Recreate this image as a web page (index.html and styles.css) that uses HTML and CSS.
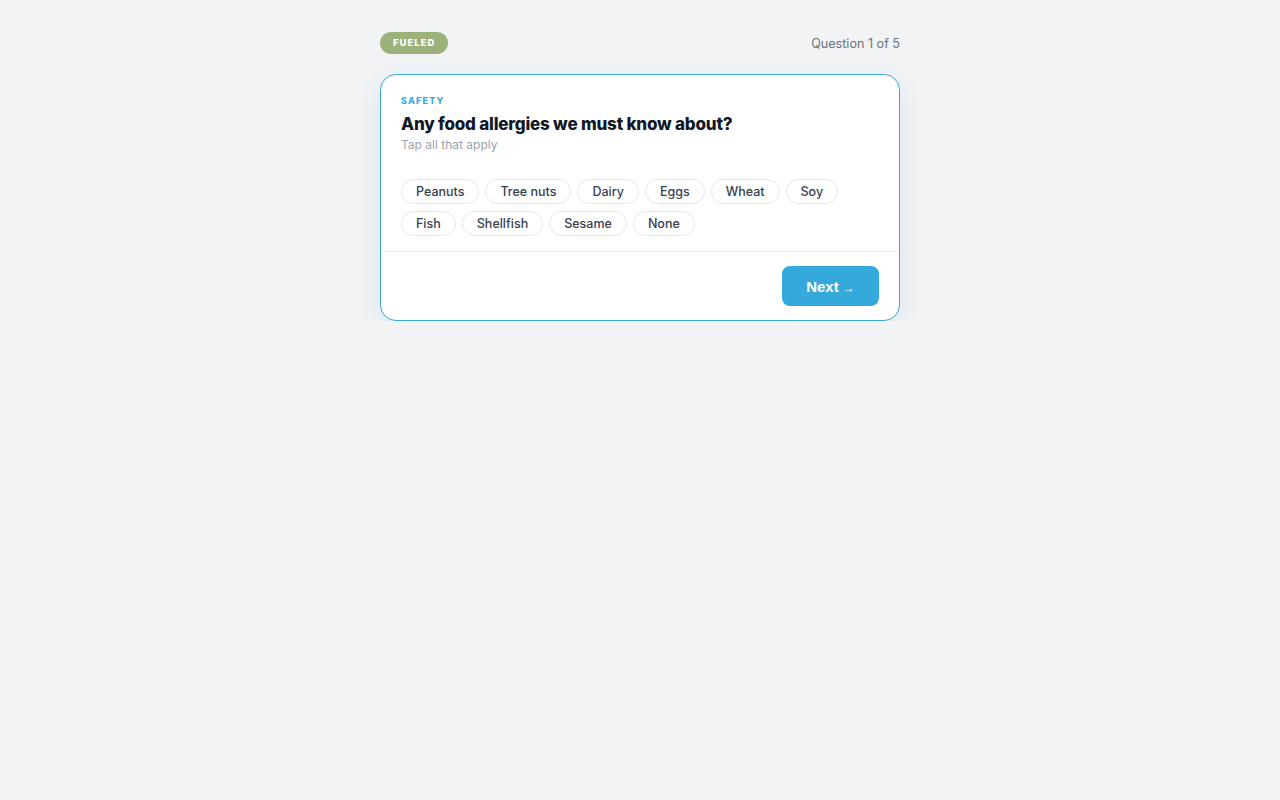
FILE: index.html
```html
<!DOCTYPE html>
<html lang="en">
<head>
    <meta charset="UTF-8">
    <meta name="viewport" content="width=device-width, initial-scale=1.0">
    <title>Fueled Quiz</title>
    <link rel="stylesheet" href="styles.css">
</head>
<body>
    <div class="wrap">
        <div class="top">
            <span class="badge">FUELED</span>
            <span class="progress">Question 1 of 5</span>
        </div>

        <div class="card">
            <div class="card-body">
                <div class="eyebrow">SAFETY</div>
                <h1 class="question">Any food allergies we must know about?</h1>
                <div class="hint">Tap all that apply</div>

                <div class="chips">
                    <button class="chip">Peanuts</button>
                    <button class="chip">Tree nuts</button>
                    <button class="chip">Dairy</button>
                    <button class="chip">Eggs</button>
                    <button class="chip">Wheat</button>
                    <button class="chip">Soy</button>
                    <button class="chip">Fish</button>
                    <button class="chip">Shellfish</button>
                    <button class="chip">Sesame</button>
                    <button class="chip">None</button>
                </div>
            </div>
            <div class="card-foot">
                <button class="next">Next <span class="arrow">&rarr;</span></button>
            </div>
        </div>
    </div>
</body>
</html>
```

FILE: styles.css
```css
body {
    margin: 0;
    font-family: Inter, "Noto Sans", sans-serif;
    background-color: #f1f3f5;
    color: #111827;
}
.wrap {
    width: 520px;
    margin: 0 auto;
    padding-top: 32px;
}
.top {
    display: flex;
    justify-content: space-between;
    align-items: center;
    height: 22px;
    margin-bottom: 20px;
}
.badge {
    background: #9db27a;
    color: #fff;
    font-size: 9.5px;
    font-weight: 800;
    letter-spacing: 1px;
    line-height: 22px;
    padding: 0 13px;
    border-radius: 11px;
}
.progress {
    font-size: 12.6px;
    color: #6b7280;
}
.card {
    background: #fff;
    border: 1px solid #3aa7d8;
    border-radius: 16px;
    box-shadow: 0 8px 24px rgba(58, 167, 216, 0.12);
    overflow: hidden;
}
.card-body {
    padding: 20px 20px 15px;
    border-bottom: 1px solid #eef0f2;
}
.eyebrow {
    font-size: 9px;
    font-weight: 800;
    letter-spacing: 1.2px;
    color: #3aa7d8;
    line-height: 12px;
}
.question {
    margin: 6px 0 0;
    font-size: 17px;
    font-weight: 800;
    line-height: 22px;
    letter-spacing: -0.2px;
    color: #111827;
}
.hint {
    margin-top: 2px;
    font-size: 12px;
    line-height: 16px;
    color: #9ca3af;
}
.chips {
    display: flex;
    flex-wrap: wrap;
    gap: 7px 6px;
    margin-top: 26px;
}
.chip {
    font-family: Inter, "Noto Sans", sans-serif;
    font-size: 12.5px;
    font-weight: 500;
    color: #374151;
    background: #fff;
    border: 1px solid #e5e7eb;
    border-radius: 13px;
    height: 25px;
    padding: 0 14px;
    cursor: pointer;
}
.card-foot {
    display: flex;
    justify-content: flex-end;
    padding: 14px 20px 14px;
}
.next {
    width: 97px;
    height: 40px;
    border: none;
    border-radius: 8px;
    background: #36a9dc;
    color: #fff;
    font-family: "Liberation Sans", Arial, sans-serif;
    font-size: 15px;
    font-weight: bold;
    cursor: pointer;
}
.arrow {
    font-size: 12px;
}
```
